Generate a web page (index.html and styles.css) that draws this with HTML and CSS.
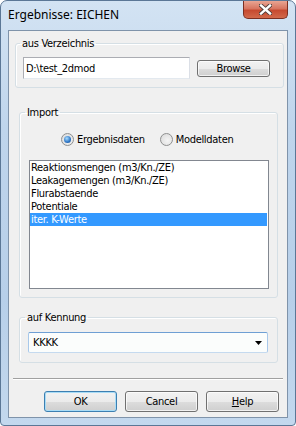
FILE: index.html
```html
<!DOCTYPE html>
<html lang="de">
<head>
  <meta charset="UTF-8">
  <meta name="viewport" content="width=device-width, initial-scale=1.0">
  <title>Ergebnisse: EICHEN</title>
  <link rel="stylesheet" href="styles.css">
</head>
<body>
<div class="window">
  <div class="titlebar">
    <span class="title">Ergebnisse: EICHEN</span>
    <div class="close-btn">
      <svg width="13" height="11" viewBox="0 0 13 11">
        <path d="M2 1.5 L11 9.5 M11 1.5 L2 9.5" stroke="#4d3b38" stroke-width="4.2" stroke-linecap="square"/>
        <path d="M2 1.5 L11 9.5 M11 1.5 L2 9.5" stroke="#ffffff" stroke-width="2.4" stroke-linecap="square"/>
      </svg>
    </div>
  </div>

  <div class="client">
    <fieldset class="group group-dir">
      <legend>aus Verzeichnis</legend>
      <div class="dir-row">
        <input type="text" class="textbox" value="D:\test_2dmod">
        <button type="button" class="btn btn-browse">Browse</button>
      </div>
    </fieldset>

    <fieldset class="group group-import">
      <legend>Import</legend>
      <div class="radio-row">
        <label class="radio"><span class="radio-dot checked"></span>Ergebnisdaten</label>
        <label class="radio"><span class="radio-dot"></span>Modelldaten</label>
      </div>
      <ul class="listbox">
        <li>Reaktionsmengen (m3/Kn./ZE)</li>
        <li>Leakagemengen (m3/Kn./ZE)</li>
        <li>Flurabstaende</li>
        <li>Potentiale</li>
        <li class="selected">iter. K-Werte</li>
      </ul>
    </fieldset>

    <fieldset class="group group-id">
      <legend>auf Kennung</legend>
      <div class="combo">
        <span>KKKK</span>
        <svg width="7" height="4" viewBox="0 0 7 4"><path d="M0 0 H7 L3.5 4 Z" fill="#000"/></svg>
      </div>
    </fieldset>

    <div class="separator"></div>

    <div class="buttons">
      <button type="button" class="btn btn-default">OK</button>
      <button type="button" class="btn">Cancel</button>
      <button type="button" class="btn"><u>H</u>elp</button>
    </div>
  </div>
</div>
</body>
</html>
```

FILE: styles.css
```css
body {
  margin: 0;
  font-family: "DejaVu Sans", sans-serif;
  font-stretch: condensed;
  font-size: 11px;
  letter-spacing: -0.3px;
  color: #000;
}

.window {
  box-sizing: border-box;
  width: 296px;
  height: 426px;
  border: 1px solid #5b7796;
  border-radius: 7px 7px 4px 4px;
  padding: 0 7px 7px;
  background: linear-gradient(#d3e3f3, #bfd5ec 30%, #b7cfe9 70%, #c3d8ee);
  display: flex;
  flex-direction: column;
}

.titlebar {
  height: 29px;
  flex-shrink: 0;
  display: flex;
  justify-content: space-between;
  align-items: flex-start;
}

.title {
  font-family: "Noto Sans", sans-serif;
  font-stretch: normal;
  font-size: 12px;
  letter-spacing: 0;
  line-height: 16px;
  margin-top: 6px;
}

.close-btn {
  box-sizing: border-box;
  width: 45px;
  height: 18px;
  border: 1px solid #7b2f22;
  border-top: none;
  border-radius: 0 0 5px 5px;
  background: linear-gradient(#e9a593, #d77560 45%, #c64a30 55%, #d2694b);
  display: flex;
  align-items: center;
  justify-content: center;
}

.client {
  flex: 1;
  background: #f0f0f0;
  border: 1px solid #7f93aa;
  display: flex;
  flex-direction: column;
}

.group {
  box-sizing: border-box;
  margin: 0;
  border: 1px solid #d5dfe5;
  border-radius: 3px;
  box-shadow: inset 1px 1px 0 #fff;
  min-inline-size: 0;
}

.group legend {
  padding: 0 2px;
  line-height: 13px;
}

.group-dir {
  width: 269px;
  margin: 6px 0 0 6px;
  padding: 7px 12px 8px 7px;
}

.group-dir legend {
  margin-left: -3px;
}

.dir-row {
  display: flex;
  align-items: center;
  gap: 7px;
}

.textbox {
  box-sizing: border-box;
  width: 167px;
  height: 22px;
  margin: 0;
  padding: 0 2px;
  border: 1px solid;
  border-color: #abadb3 #dbdfe6 #e3e9ef #abadb3;
  background: #fff;
  font: inherit;
  letter-spacing: inherit;
  color: #000;
}

.btn {
  box-sizing: border-box;
  width: 73px;
  height: 21px;
  margin: 0;
  padding: 0;
  border: 1px solid #707070;
  border-radius: 3px;
  background: linear-gradient(#f2f2f2, #ebebeb 50%, #dddddd 51%, #cfcfcf);
  box-shadow: inset 0 0 0 1px rgba(255, 255, 255, 0.7);
  font: inherit;
  letter-spacing: inherit;
  color: #000;
}

.btn-browse {
  height: 17px;
  line-height: 13px;
}

.btn-default {
  border-color: #3c7fb1;
  box-shadow: inset 0 0 0 1px #a9dcf6;
}

.group-import {
  width: 259px;
  margin: 18px 0 0 10px;
  padding: 14px 8px 8px 9px;
}

.group-import legend {
  margin-left: -4px;
}

.radio-row {
  display: flex;
  align-items: center;
  gap: 15px;
  height: 13px;
  padding-left: 32px;
}

.radio {
  display: flex;
  align-items: center;
  gap: 3px;
  line-height: 13px;
}

.radio-dot {
  box-sizing: border-box;
  width: 13px;
  height: 13px;
  border: 1px solid #8e8f8f;
  border-radius: 50%;
  background: radial-gradient(circle at 60% 60%, #f4f4f4, #d8d8d8);
  display: flex;
  align-items: center;
  justify-content: center;
}

.radio-dot.checked::after {
  content: "";
  width: 7px;
  height: 7px;
  border-radius: 50%;
  background: radial-gradient(circle at 40% 35%, #a8dcff, #2c74c4 60%, #1a4f8e);
}

.listbox {
  box-sizing: border-box;
  list-style: none;
  margin: 14px 0 0;
  padding: 0;
  width: 240px;
  height: 129px;
  border: 1px solid #828790;
  background: #fff;
}

.listbox li {
  line-height: 13px;
  padding-left: 1px;
  margin-right: 1px;
}

.listbox li.selected {
  background: #3399ff;
  color: #fff;
}

.group-id {
  width: 259px;
  margin: 13px 0 0 10px;
  padding: 8px 9px 9px 8px;
}

.group-id legend {
  margin-left: -3px;
}

.combo {
  box-sizing: border-box;
  width: 240px;
  height: 21px;
  border: 1px solid;
  border-color: #6e9fd4 #a8c8ea #c5daef #a8c8ea;
  border-radius: 2px;
  background: #fbfdfc;
  display: flex;
  align-items: center;
  justify-content: space-between;
  padding: 0 5px 0 4px;
}

.separator {
  width: 270px;
  height: 1px;
  margin: 15px 0 0 4px;
  background: #a0a0a0;
  border-bottom: 1px solid #fff;
}

.buttons {
  display: flex;
  justify-content: flex-end;
  gap: 8px;
  margin: 11px 8px 0 0;
}
```
